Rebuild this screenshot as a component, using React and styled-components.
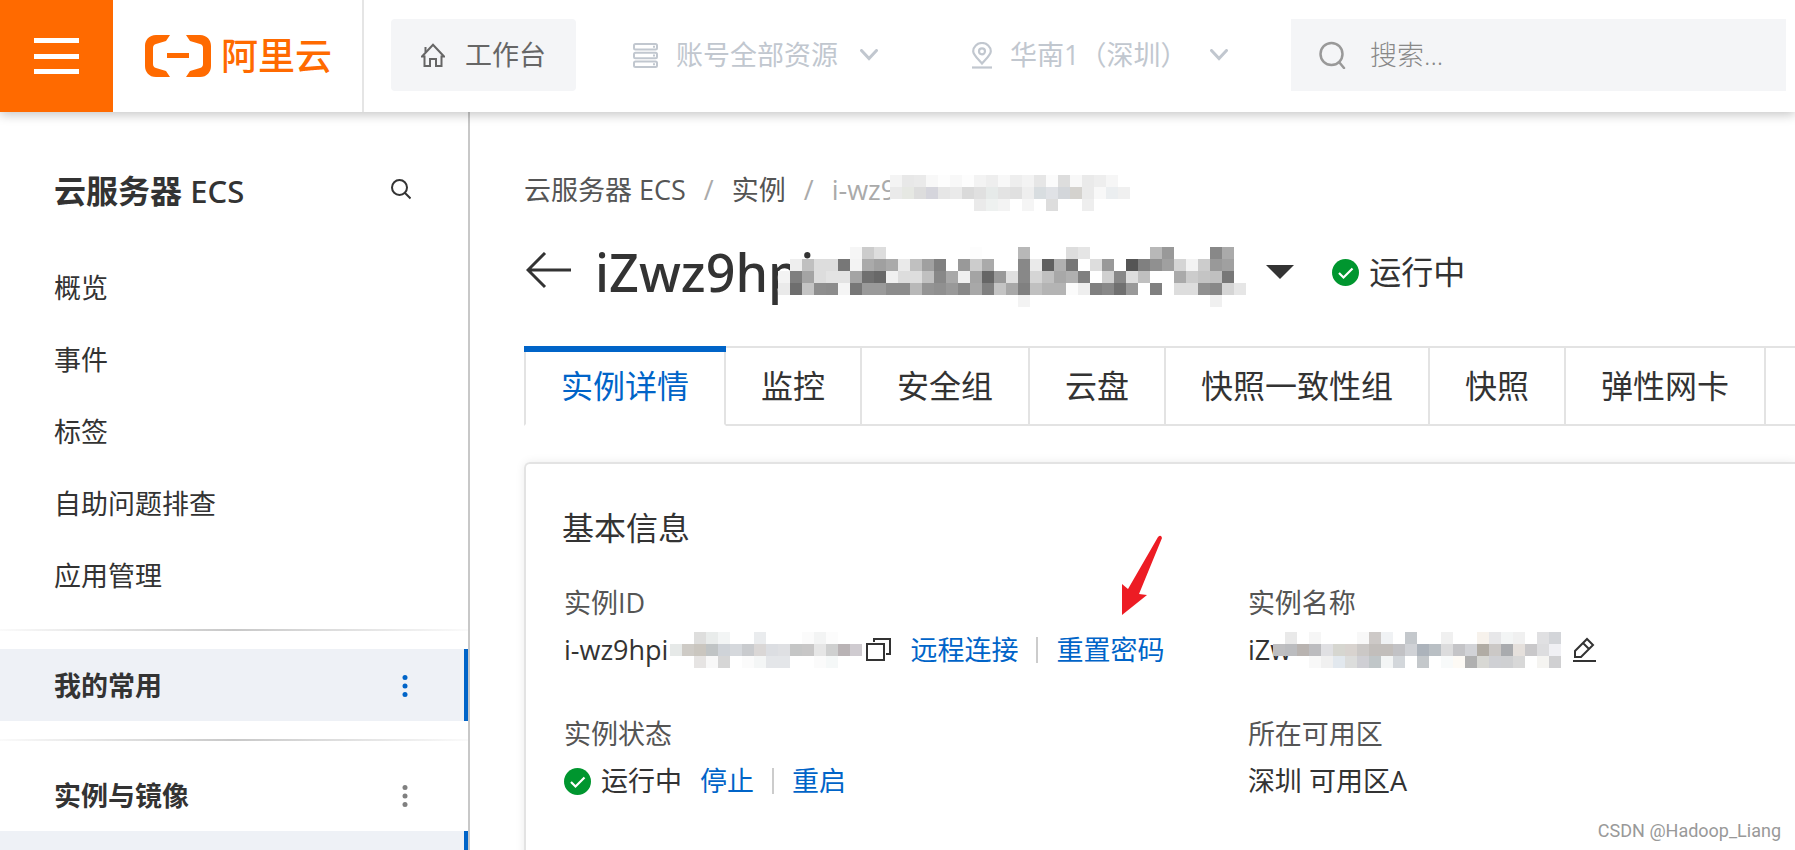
import styled, { createGlobalStyle } from 'styled-components';

const GlobalStyle = createGlobalStyle`
    * {
        box-sizing: border-box;
    }
    body {
        margin: 0;
        background: #fff;
        color: #333;
        font-family: 'Open Sans', 'Noto Sans CJK SC', sans-serif;
        font-size: 27px;
        line-height: 36px;
    }
    button,
    input,
    select {
        font: inherit;
        color: inherit;
        margin: 0;
        padding: 0;
        border: none;
        border-radius: 0;
        background: transparent;
        outline: none;
    }
    h1,
    h2,
    p,
    ul,
    ol,
    dl,
    dt,
    dd {
        margin: 0;
        padding: 0;
    }
    ul,
    ol {
        list-style: none;
    }
    a {
        color: inherit;
        text-decoration: none;
    }
    svg {
        display: block;
        flex: none;
    }
`;

const Page = styled.div`
    height: 100vh;
    display: flex;
    flex-direction: column;
    overflow: hidden;
    position: relative;
`;

const TopBar = styled.header`
    display: flex;
    flex: none;
    height: 112px;
    position: relative;
    z-index: 1;
    background: #fff;
    box-shadow: 0 3px 10px rgba(0, 0, 0, 0.22);
`;

const MenuButton = styled.button`
    width: 113px;
    background: #ff6a00;
    display: flex;
    align-items: center;
    justify-content: center;
    cursor: pointer;
`;

const Logo = styled.a`
    display: flex;
    align-items: center;
    gap: 10px;
    padding: 0 30px 0 32px;
    border-right: 2px solid #e5e5e5;
    color: #ff6a00;
    font-size: 37px;
    font-weight: 500;
    line-height: 40px;
    white-space: nowrap;
`;

const Nav = styled.nav`
    flex: 1;
    min-width: 0;
    display: flex;
    align-items: center;
    gap: 12px;
    padding: 0 9px 2px 27px;
`;

const Workbench = styled.a`
    height: 72px;
    display: flex;
    align-items: center;
    gap: 20px;
    padding: 0 30px;
    margin-right: 4px;
    border-radius: 4px;
    background: #f4f5f7;
    color: #666;
    white-space: nowrap;
`;

const NavSelect = styled.label`
    display: flex;
    align-items: center;
    padding: 0 41px;
    color: #c1c7cf;
    select {
        appearance: none;
        margin: 0 22px 0 18px;
        cursor: pointer;
    }
`;

const SearchBox = styled.label`
    flex: 1;
    min-width: 0;
    height: 72px;
    display: flex;
    align-items: center;
    gap: 24px;
    padding: 0 28px;
    margin-left: 10px;
    background: #f4f5f7;
    color: #999;
    input {
        flex: 1;
        min-width: 0;
        font-weight: 300;
    }
    input::placeholder {
        color: #888;
        opacity: 1;
    }
`;

const Body = styled.div`
    flex: 1;
    min-height: 0;
    display: flex;
`;

const Sidebar = styled.aside`
    width: 470px;
    flex: none;
    padding-top: 47px;
    border-right: 2px solid #c8c8c8;
    overflow: hidden;
`;

const SideHeader = styled.div`
    height: 64px;
    display: flex;
    align-items: center;
    justify-content: space-between;
    padding: 0 57px 0 54px;
    margin-bottom: 28px;
`;

const SideTitle = styled.h2`
    font-size: 32px;
    font-weight: 700;
    span {
        font-family: 'Noto Sans', sans-serif;
        font-size: 31px;
        font-weight: 500;
    }
`;

const IconButton = styled.button`
    display: flex;
    cursor: pointer;
`;

const SideLink = styled.a`
    display: flex;
    align-items: center;
    height: 72px;
    padding: 2px 0 0 54px;
`;

const Separator = styled.hr`
    height: 2px;
    margin: 18px 0;
    border: none;
    background: linear-gradient(to right, #fafafa, #c8c8c8, #fafafa);
`;

const SideGroup = styled.div`
    display: flex;
    align-items: center;
    justify-content: space-between;
    height: 72px;
    padding: 2px 56px 0 54px;
    font-weight: 700;
    color: #333;
    background: ${props => (props.$active ? '#eef1f6' : 'transparent')};
    border-right: 4px solid ${props => (props.$active ? '#0064c8' : 'transparent')};
    button {
        color: ${props => (props.$active ? '#0064c8' : '#808080')};
    }
`;

const Main = styled.main`
    flex: 1;
    min-width: 0;
    padding: 57px 0 0 54px;
    overflow: hidden;
`;

const Breadcrumb = styled.ol`
    display: flex;
    line-height: 42px;
    color: #555;
    white-space: nowrap;
    li {
        display: flex;
        align-items: flex-end;
    }
    li + li::before {
        content: '/';
        margin: 0 18px;
        color: #aaa;
    }
    li:last-child {
        color: #aaa;
    }
`;

const TitleRow = styled.div`
    display: flex;
    align-items: center;
    height: 70px;
    margin: 26px 0 39px;
`;

const BackButton = styled(IconButton)`
    margin: 0 24px 0 2px;
`;

const Title = styled.h1`
    display: flex;
    align-items: flex-end;
    font-family: 'Noto Sans', sans-serif;
    font-size: 52px;
    font-weight: 500;
    line-height: 70px;
`;

const MosaicSvg = styled.svg`
    margin-left: ${props => props.$shift}px;
`;

const SwitchButton = styled(IconButton)`
    margin: 0 38px 0 20px;
`;

const Status = styled.span`
    display: inline-flex;
    align-items: center;
    gap: 10px;
    font-size: ${props => (props.$large ? 32 : 27)}px;
`;

const Tabs = styled.div`
    display: flex;
    margin-bottom: 36px;
`;

const Tab = styled.button`
    position: relative;
    flex: ${props => (props.$rest ? '1 0 0' : 'none')};
    height: 80px;
    padding: 0 35px;
    border: 2px solid #e3e3e3;
    border-left: none;
    font-size: 32px;
    line-height: 40px;
    white-space: nowrap;
    cursor: pointer;
    ${props =>
        props.$active &&
        `
        color: #0064c8;
        border-left: 2px solid #e3e3e3;
        border-bottom-color: transparent;
        &::before {
            content: '';
            position: absolute;
            top: -2px;
            left: -2px;
            right: -2px;
            height: 6px;
            background: #0064c8;
        }
    `}
`;

const Card = styled.section`
    padding: 44px 0 0 36px;
    height: 100%;
    border: 2px solid #e3e3e3;
    border-right: none;
    border-radius: 6px 0 0 0;
    box-shadow: 0 0 10px rgba(0, 0, 0, 0.08);
`;

const CardTitle = styled.h2`
    font-size: 32px;
    font-weight: 400;
    line-height: 40px;
    margin-bottom: 37px;
`;

const Fields = styled.dl`
    display: grid;
    grid-template-columns: 5fr 4fr;
    row-gap: 48px;
    padding-left: 2px;
    dt {
        color: #555;
        margin-bottom: 11px;
    }
    dd {
        display: flex;
        align-items: center;
        white-space: nowrap;
    }
`;

const Actions = styled.span`
    display: inline-flex;
    align-items: center;
    margin-left: 18px;
    color: #0064c8;
    a + a {
        display: flex;
        align-items: center;
    }
    a + a::before {
        content: '';
        width: 2px;
        height: 26px;
        margin: 0 18px;
        background: #ccc;
    }
`;

const Pointed = styled.span`
    position: relative;
`;

const Pointer = styled.svg`
    position: absolute;
    left: 66px;
    bottom: 53px;
`;

const Watermark = styled.p`
    position: absolute;
    right: 14px;
    bottom: 7px;
    font-family: Roboto, sans-serif;
    font-size: 18px;
    line-height: 24px;
    color: #999;
`;

const CELL = 12;

// One string per row; a cell is a grey level, a full colour, or '.' for nothing
const masks = {
    crumb: [
        'f4 e8 ea f8 fd f8 fd f3 ee f8 ee f3 e6 fb dd f8 ea ee f6 .',
        'ea e6e8e3 dd d5d5dc e6 ea da e0 e6eae9 e3 e0 ee d8dde0 e0e2e6 d3d6da d4d2ce ea f8 ebeef0 f0',
        '. . . . . . . ea eef1f0 f3 . f5 . dd . . ee . . .',
    ],
    title: [
        '. . . . . . f6 cc dd . . . . . . . fd . . . b8 . . . dd e5 . . . . . b8 99 . . . 88 aa .',
        '. ee c0 dd dd 77 f3 aa a0 aa ea c0 a0 80 ff 99 cc aa ff ff 88 ea 60 b0 77 ff dd 99 ff 55 80 90 a0 d5 f3 cc 99 a0 .',
        'f3 7f a4 dd e3 e3 a4 70 68 f0 dd dd c0 88 a8 f0 a4 66 99 e0 88 d5 c0 a8 b0 80 ff d0 88 dd c0 ff ff aa cc c4 c0 77 .',
        'ea 6e c4 8e 8c f5 77 9a 9a 8c 8c b8 94 90 99 88 a8 80 c4 a8 80 c0 b4 b4 fb ee 80 88 70 99 ff 80 ff dd dd 90 88 d5 e6',
        '. . . . . . . . . . . . . . . . . . . . f3 . . . . . . . . . . . . . . . f0 . .',
    ],
    id: [
        '. . dededd e9eceb f3f5f5 . . eaecee . . . fb f3f4f4 fc . .',
        'e6e9e8 cecbc6 cac6bf c0c4c5 cfd3d8 d5d8dc c9cbce dad7d6 dcdee2 dfe0e3 c5c6c6 c8c7c7 e6 cfd0d0 b9b3b5 cfcbd0',
        '. . e6e4e3 f8 d6 . fb f4f6f6 e4e6e9 e4e6e9 . . fb f5f8f8 . .',
    ],
    name: [
        '. e9 . f6 . . . f8 cdc9c7 f0f2f4 . c4c8cc . . f0 . . f7f2ec e7e7e9 f3f5f5 f0 . e0e0e2 d3d5d9',
        'bfbfc1 bbbcbf b8b3b0 bcbcbf e0e0e3 d6d6d0 d8d3cf cbc8c6 c2bebb c2bebb c2c2c5 d0d2d6 acb3bb b9bfc4 dcdcdd c4c4c7 d2d3d7 b1aca4 cbc8c6 a9abae e5e0dc c9c8ca dddddf f0f0f4',
        '. . . f8 f0 e2e8ee dcdddc cfcfd4 c0c6c8 f3f5f5 d3d7db . c4c8cb . f8fafa fdfaf5 b0b0b0 d8d8d4 cfd0d4 cfd0d2 d8 . f5f4f1 d0d0d2',
    ],
};

const Mosaic = ({ name, shift }) => {
    const rows = masks[name].map(row => row.split(' '));
    return (
        <MosaicSvg
            $shift={shift}
            width={rows[0].length * CELL}
            height={rows.length * CELL}
            shapeRendering='crispEdges'
            aria-hidden='true'
        >
            {rows.map((row, y) =>
                row.map(
                    (cell, x) =>
                        cell !== '.' && (
                            <rect
                                key={`${x}-${y}`}
                                x={x * CELL}
                                y={y * CELL}
                                width={CELL}
                                height={CELL}
                                fill={`#${cell.length === 2 ? cell.repeat(3) : cell}`}
                            />
                        )
                )
            )}
        </MosaicSvg>
    );
};

const Chevron = () => (
    <svg width='18' height='12' viewBox='0 0 18 12' fill='none' stroke='currentColor' strokeWidth='3'>
        <path d='M1.5 1.5 9 9.5l7.500-8' strokeLinecap='round' />
    </svg>
);

const CheckIcon = () => (
    <svg width='27' height='27' viewBox='0 0 27 27'>
        <circle cx='13.500' cy='13.500' r='13.500' fill='#00962f' />
        <path d='m7 14 4.500 4.500 9-9' fill='none' stroke='#fff' strokeWidth='2.200' />
    </svg>
);

const Dots = () => (
    <svg width='6' height='22' viewBox='0 0 6 22' fill='currentColor'>
        <circle cx='3' cy='2.500' r='2.500' />
        <circle cx='3' cy='11' r='2.500' />
        <circle cx='3' cy='19.500' r='2.500' />
    </svg>
);

const sideLinks = ['概览', '事件', '标签', '自助问题排查', '应用管理'];
const tabs = ['监控', '安全组', '云盘', '快照一致性组', '快照', '弹性网卡'];

const App = () => (
    <Page>
        <GlobalStyle />
        <TopBar>
            <MenuButton aria-label='菜单'>
                <svg width='45' height='36' fill='#fff'>
                    <rect width='45' height='5' />
                    <rect y='16' width='45' height='5' />
                    <rect y='31' width='45' height='5' />
                </svg>
            </MenuButton>
            <Logo href='#'>
                <svg width='66' height='42' viewBox='0 0 66 42' fill='currentColor'>
                    <path d='M25 0H11C4 0 0 5 0 11v20c0 6 4 11 11 11h14l-4-6-10-3c-2-.6-3-2-3-4V13c0-2 1-3.400 3-4l10-3z' />
                    <path d='M41 0h14c7 0 11 5 11 11v20c0 6-4 11-11 11H41l4-6 10-3c2-.6 3-2 3-4V13c0-2-1-3.400-3-4L45 6z' />
                    <rect x='22' y='18' width='22' height='5' />
                </svg>
                阿里云
            </Logo>
            <Nav>
                <Workbench href='#'>
                    <svg width='24' height='24' viewBox='0 0 24 24' fill='none' stroke='currentColor' strokeWidth='2'>
                        <path d='M1 13.500 12 1.800l11 11.700h-2.500V23H15v-7H9v7H3.500v-9.500z' />
                        <path d='M4.500 9V4' />
                    </svg>
                    工作台
                </Workbench>
                <NavSelect>
                    <svg width='25' height='25' viewBox='0 0 25 25' fill='none' stroke='currentColor' strokeWidth='2'>
                        <rect x='1' y='1' width='23' height='5.500' rx='1.500' />
                        <rect x='1' y='9.700' width='23' height='5.500' rx='1.500' />
                        <rect x='1' y='18.500' width='23' height='5.500' rx='1.500' />
                        <path d='M20 3.800h2M20 12.500h2M20 21.300h2' />
                    </svg>
                    <select aria-label='资源'>
                        <option>账号全部资源</option>
                    </select>
                    <Chevron />
                </NavSelect>
                <NavSelect>
                    <svg width='20' height='27' viewBox='0 0 20 27' fill='none' stroke='currentColor' strokeWidth='2.200'>
                        <path d='M10 21.500C6 17 1.200 13 1.200 9.300a8.800 8.300 0 0 1 17.600 0C18.800 13 14 17 10 21.500z' />
                        <circle cx='10' cy='9.300' r='3' />
                        <path d='M0 25.500h20' />
                    </svg>
                    <select aria-label='地域'>
                        <option>华南1（深圳）</option>
                    </select>
                    <Chevron />
                </NavSelect>
                <SearchBox>
                    <svg width='27' height='28' viewBox='0 0 27 28' fill='none' stroke='currentColor' strokeWidth='2.500'>
                        <circle cx='12.500' cy='13' r='11' />
                        <path d='m20 21 5 6' strokeLinecap='round' />
                    </svg>
                    <input type='text' placeholder='搜索...' aria-label='搜索' />
                </SearchBox>
            </Nav>
        </TopBar>
        <Body>
            <Sidebar>
                <SideHeader>
                    <SideTitle>
                        云服务器 <span>ECS</span>
                    </SideTitle>
                    <IconButton aria-label='搜索'>
                        <svg width='20' height='24' viewBox='0 0 20 24' fill='none' stroke='#333' strokeWidth='2'>
                            <circle cx='8.500' cy='8.500' r='7.500' />
                            <path d='m13.500 13.500 6 6' />
                        </svg>
                    </IconButton>
                </SideHeader>
                <ul>
                    {sideLinks.map(text => (
                        <li key={text}>
                            <SideLink href='#'>{text}</SideLink>
                        </li>
                    ))}
                </ul>
                <Separator />
                <SideGroup $active>
                    我的常用
                    <IconButton aria-label='更多'>
                        <Dots />
                    </IconButton>
                </SideGroup>
                <Separator />
                <SideGroup>
                    实例与镜像
                    <IconButton aria-label='更多'>
                        <Dots />
                    </IconButton>
                </SideGroup>
                <SideGroup $active />
            </Sidebar>
            <Main>
                <Breadcrumb>
                    <li>
                        <a href='#'>云服务器 ECS</a>
                    </li>
                    <li>
                        <a href='#'>实例</a>
                    </li>
                    <li>
                        i-wz9
                        <Mosaic name='crumb' shift={-6} />
                    </li>
                </Breadcrumb>
                <TitleRow>
                    <BackButton aria-label='返回'>
                        <svg width='45' height='40' viewBox='0 0 45 40' fill='none' stroke='#333' strokeWidth='3'>
                            <path d='M19 1 2 18l17 17M2 18h43' />
                        </svg>
                    </BackButton>
                    <Title>
                        iZwz9hpi
                        <Mosaic name='title' shift={-36} />
                    </Title>
                    <SwitchButton aria-label='切换实例'>
                        <svg width='28' height='14' fill='#333'>
                            <path d='M0 0h28L14 14z' />
                        </svg>
                    </SwitchButton>
                    <Status $large>
                        <CheckIcon />
                        运行中
                    </Status>
                </TitleRow>
                <Tabs role='tablist'>
                    <Tab role='tab' aria-selected='true' $active>
                        实例详情
                    </Tab>
                    {tabs.map(text => (
                        <Tab key={text} role='tab'>
                            {text}
                        </Tab>
                    ))}
                    <Tab role='tab' $rest />
                </Tabs>
                <Card>
                    <CardTitle>基本信息</CardTitle>
                    <Fields>
                        <div>
                            <dt>实例ID</dt>
                            <dd>
                                i-wz9hpi
                                <Mosaic name='id' shift={2} />
                                <IconButton aria-label='复制'>
                                    <svg width='30' height='26' viewBox='0 0 30 26' fill='none' stroke='#333' strokeWidth='2'>
                                        <path d='M5 7h17v16H5zM12 5V2h16v15h-4' />
                                    </svg>
                                </IconButton>
                                <Actions>
                                    <a href='#'>远程连接</a>
                                    <a href='#'>
                                        <Pointed>
                                            重置密码
                                            <Pointer width='40' height='80' viewBox='0 0 40 80' fill='#ed1c24'>
                                                <path d='M0 80V49l6 5L36 2q3-3 4 1L17 59l8 1z' />
                                            </Pointer>
                                        </Pointed>
                                    </a>
                                </Actions>
                            </dd>
                        </div>
                        <div>
                            <dt>实例名称</dt>
                            <dd>
                                iZw
                                <Mosaic name='name' shift={-18} />
                                <IconButton aria-label='编辑'>
                                    <svg width='36' height='26' viewBox='0 0 36 26' fill='none' stroke='#333' strokeWidth='2'>
                                        <path d='M14 20v-6L26 2l6 6-12 12zM22 6l6 6M12 24h23' />
                                    </svg>
                                </IconButton>
                            </dd>
                        </div>
                        <div>
                            <dt>实例状态</dt>
                            <dd>
                                <Status>
                                    <CheckIcon />
                                    运行中
                                </Status>
                                <Actions>
                                    <a href='#'>停止</a>
                                    <a href='#'>重启</a>
                                </Actions>
                            </dd>
                        </div>
                        <div>
                            <dt>所在可用区</dt>
                            <dd>深圳 可用区A</dd>
                        </div>
                    </Fields>
                </Card>
            </Main>
        </Body>
        <Watermark>CSDN @Hadoop_Liang</Watermark>
    </Page>
);

export default App;
